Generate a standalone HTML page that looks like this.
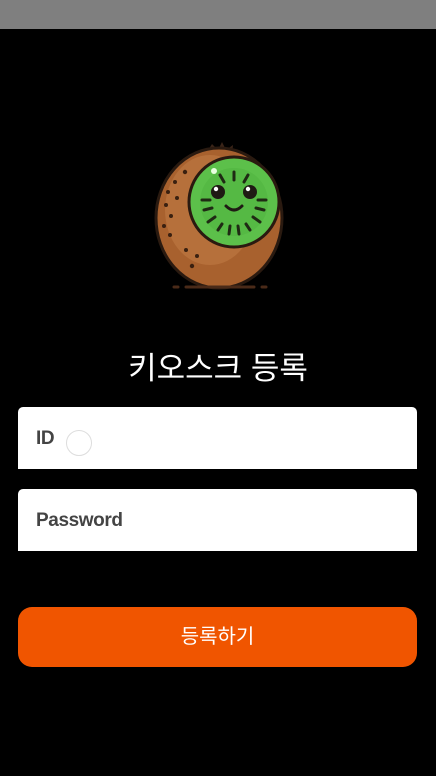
<!DOCTYPE html>
<html><head><meta charset="utf-8">
<style>
html,body{margin:0;padding:0;width:436px;height:776px;background:#000;overflow:hidden;font-family:"Liberation Sans","Noto Sans CJK KR",sans-serif;}
.top{position:absolute;left:0;top:0;width:436px;height:29px;background:#7f7f7f;}
.title{position:absolute;left:0;width:436px;top:347px;text-align:center;color:#fff;font-size:31px;line-height:44px;}
.inp{position:absolute;left:18px;width:399px;height:62px;background:#fff;border-radius:5px 5px 0 0;}
.inp span{position:absolute;left:18px;top:21px;font-size:19px;font-weight:bold;color:#444;letter-spacing:-0.4px}
.circ{position:absolute;left:48px;top:23px;width:24px;height:24px;border:1.5px solid #ddd;border-radius:50%;}
.btn{position:absolute;left:18px;top:607px;width:399px;height:60px;background:#f05500;border-radius:14px;color:#fff;text-align:center;line-height:60px;font-size:20px;}
</style></head><body>
<div class="top"></div>
<svg style="position:absolute;left:140px;top:130px" width="160" height="170" viewBox="0 0 160 170">
  <path d="M67 22 L72 14 L78 20 L82 12 L86 20 L93 15 L92 24 Z" fill="#3a2418"/>
  <ellipse cx="79" cy="88" rx="63" ry="70" fill="#a8612e" stroke="#2a1a10" stroke-width="3"/>
  <ellipse cx="70" cy="80" rx="45" ry="55" fill="#c07a45" opacity="0.6"/>
  <g fill="#3a2010">
    <circle cx="45" cy="42" r="2.2"/><circle cx="35" cy="52" r="2"/><circle cx="28" cy="62" r="2"/><circle cx="37" cy="68" r="2"/>
    <circle cx="26" cy="75" r="2"/><circle cx="31" cy="86" r="2"/><circle cx="24" cy="96" r="2"/><circle cx="30" cy="105" r="2"/>
    <circle cx="46" cy="120" r="2"/><circle cx="57" cy="126" r="2"/><circle cx="52" cy="136" r="2.2"/>
  </g>
  <circle cx="94" cy="72" r="45" fill="#5cc04a" stroke="#2a1a10" stroke-width="3"/>
  <circle cx="94" cy="72" r="34" fill="#4eb23e" opacity="0.5"/>
  <circle cx="74" cy="41" r="3" fill="#e8ffe0"/>
  <g stroke="#1f2a14" stroke-width="3" stroke-linecap="round">
    <line x1="94" y1="42" x2="94" y2="50"/><line x1="80" y1="45" x2="84" y2="52"/><line x1="108" y1="45" x2="104" y2="52"/>
    <line x1="62" y1="70" x2="70" y2="70"/><line x1="118" y1="70" x2="126" y2="70"/>
    <line x1="64" y1="80" x2="72" y2="78"/><line x1="116" y1="78" x2="124" y2="80"/>
    <line x1="68" y1="92" x2="75" y2="87"/><line x1="113" y1="87" x2="120" y2="92"/>
    <line x1="78" y1="100" x2="82" y2="94"/><line x1="106" y1="94" x2="110" y2="100"/>
    <line x1="89" y1="104" x2="90" y2="96"/><line x1="99" y1="104" x2="98" y2="96"/>
  </g>
  <circle cx="78" cy="62" r="7" fill="#1f1a14"/><circle cx="110" cy="62" r="7" fill="#1f1a14"/>
  <circle cx="76" cy="59" r="2.2" fill="#fff"/><circle cx="108" cy="59" r="2.2" fill="#fff"/>
  <path d="M86 76 Q94 84 102 76" fill="none" stroke="#1f1a14" stroke-width="3" stroke-linecap="round"/>
  <g stroke="#4a2a18" stroke-width="3" stroke-linecap="round">
    <line x1="34" y1="157" x2="38" y2="157"/><line x1="46" y1="157" x2="114" y2="157"/><line x1="122" y1="157" x2="126" y2="157"/>
  </g>
</svg>
<div class="title">키오스크 등록</div>
<div class="inp" style="top:407px"><span>ID</span><div class="circ"></div></div>
<div class="inp" style="top:489px"><span>Password</span></div>
<div class="btn">등록하기</div>
</body></html>
